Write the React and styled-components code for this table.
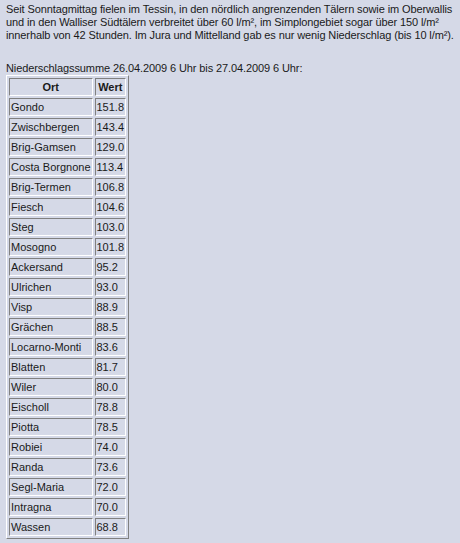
import React from 'react';
import styled, { createGlobalStyle } from 'styled-components';

const GlobalStyle = createGlobalStyle`
  html, body {
    margin: 0;
    padding: 0;
    background: #d5d9e7;
  }
`;

const Page = styled.div`
  padding: 3px 6px 4px 6px;
  font-family: "Liberation Sans", Arial, sans-serif;
  font-size: 11px;
  line-height: 13px;
  color: #1a1a1a;
`;

const Para = styled.p`
  margin: 0 0 20px 0;
  white-space: nowrap;
  letter-spacing: -0.11px;
`;

const Caption = styled.div`
  margin: 0;
  letter-spacing: -0.1px;
`;

const Table = styled.table`
  border: 1px solid;
  border-color: #ffffff #808080 #808080 #ffffff;
  border-spacing: 2px;
  font-size: 11px;
`;

const Cell = styled.td`
  border: 1px solid;
  border-color: #808080 #ffffff #ffffff #808080;
  padding: 1px;
  height: 14px;
  line-height: 14px;
  text-align: ${(p) => (p.$head ? 'center' : 'left')};
  font-weight: ${(p) => (p.$head ? 'bold' : 'normal')};
  white-space: nowrap;
`;

const rows = [
  ['Gondo', '151.8'],
  ['Zwischbergen', '143.4'],
  ['Brig-Gamsen', '129.0'],
  ['Costa Borgnone', '113.4'],
  ['Brig-Termen', '106.8'],
  ['Fiesch', '104.6'],
  ['Steg', '103.0'],
  ['Mosogno', '101.8'],
  ['Ackersand', '95.2'],
  ['Ulrichen', '93.0'],
  ['Visp', '88.9'],
  ['Grächen', '88.5'],
  ['Locarno-Monti', '83.6'],
  ['Blatten', '81.7'],
  ['Wiler', '80.0'],
  ['Eischoll', '78.8'],
  ['Piotta', '78.5'],
  ['Robiei', '74.0'],
  ['Randa', '73.6'],
  ['Segl-Maria', '72.0'],
  ['Intragna', '70.0'],
  ['Wassen', '68.8'],
];

export default function App() {
  return (
    <>
      <GlobalStyle />
      <Page>
        <Para>
          Seit Sonntagmittag fielen im Tessin, in den nördlich angrenzenden Tälern sowie im Oberwallis
          <br />
          und in den Walliser Südtälern verbreitet über 60 l/m², im Simplongebiet sogar über 150 l/m²
          <br />
          innerhalb von 42 Stunden. Im Jura und Mittelland gab es nur wenig Niederschlag (bis 10 l/m²).
        </Para>
        <Caption>Niederschlagssumme 26.04.2009 6 Uhr bis 27.04.2009 6 Uhr:</Caption>
        <Table>
          <tbody>
            <tr>
              <Cell $head>Ort</Cell>
              <Cell $head>Wert</Cell>
            </tr>
            {rows.map(([ort, wert]) => (
              <tr key={ort}>
                <Cell>{ort}</Cell>
                <Cell>{wert}</Cell>
              </tr>
            ))}
          </tbody>
        </Table>
      </Page>
    </>
  );
}
